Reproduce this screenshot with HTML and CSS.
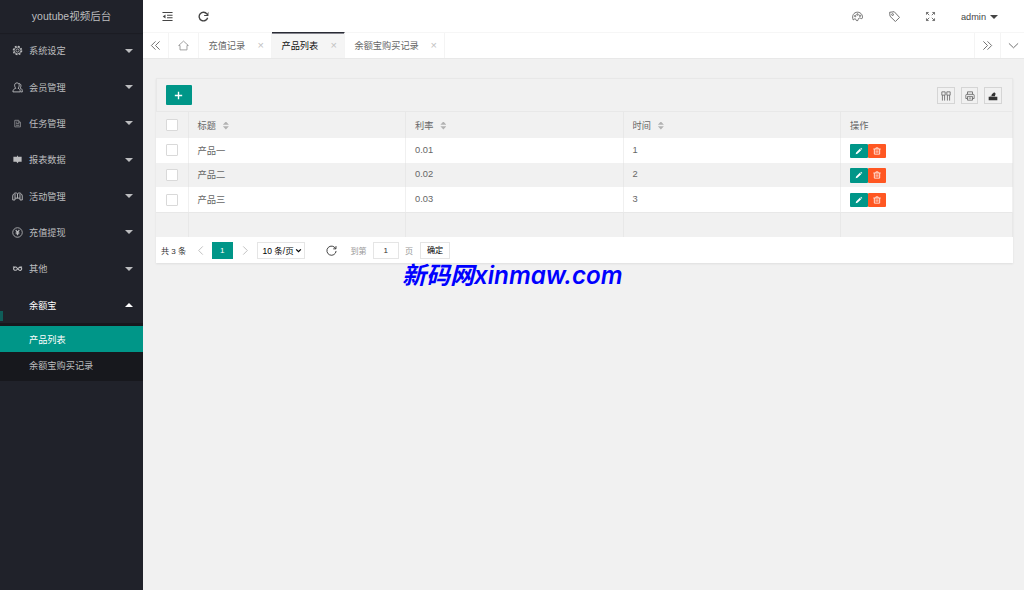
FILE: index.html
```
<!DOCTYPE html>
<html lang="zh-CN">
<head>
    <meta charset="UTF-8">
    <meta name="viewport" content="width=device-width, initial-scale=1.0">
    <title>youtube视频后台</title>
    <link rel="stylesheet" href="styles.css">
</head>
<body>
    <div class="side">
        <div class="logo">youtube视频后台</div>
        <ul class="nav">
            <li><svg class="ico" viewBox="0 0 12 12"><circle cx="6" cy="6" r="4.6" stroke-width="1.300" stroke-dasharray="2 1.610"/><circle cx="6" cy="6" r="3.7" stroke-width=".9"/><circle cx="6" cy="6" r="1.700" stroke-width=".9"/></svg><span>系统设定</span><i class="down"></i></li>
            <li><svg class="ico" viewBox="0 0 12 12"><path d="M4.2 6.800C2 4.500 2.500 1 5.400 1S8.600 4.500 6.600 6.800C8.300 7.500 9 8.300 9 10.800H1C1 8.500 2.200 7.500 4.200 6.800M7.500 1.500C10.300 1.900 10.200 5 8.800 6.500C10.500 7.200 11.300 8 11.300 10.800H9.500"/></svg><span>会员管理</span><i class="down"></i></li>
            <li><svg class="ico dim" viewBox="0 0 12 12"><path d="M3 2.500H7L9.200 4.500V9.700H3ZM6.800 2.500V4.700H9M4.300 4.500H5.500M4.300 6.200H8M4.300 8H8"/></svg><span>任务管理</span><i class="down"></i></li>
            <li><svg class="ico" viewBox="0 0 12 12"><path class="fill" d="M1.500 3H5.500V2H6.500V3H10.500V8.500H7.200L6 10.200L4.800 8.500H1.500Z"/></svg><span>报表数据</span><i class="down"></i></li>
            <li><svg class="ico" viewBox="0 0 12 12"><path d="M.8 9.800V5.500C1.300 1.800 5 1.500 6 3C7 1.500 10.700 1.800 11.200 5.500V9.800H8.700V7.800H3.300V9.800ZM6 3V7.800M3.300 3V7.800M8.700 3V7.800"/></svg><span>活动管理</span><i class="down"></i></li>
            <li><svg class="ico" viewBox="0 0 12 12"><circle cx="6" cy="6" r="5.200" stroke-width=".9"/><path d="M4 3.200L6 5.600L8 3.200M6 5.600V9M4 5.700H8M4 7.300H8" stroke-width="1.100"/></svg><span>充值提现</span><i class="down"></i></li>
            <li><svg class="ico" viewBox="0 0 12 12"><path d="M1 4.300H4.300L7.500 7.500C8.800 8.600 10.800 7.700 10.600 6.200C10.300 4.600 8.200 4.500 7.300 5.400L5 7.500C3.800 8.500 1.700 7.800 1.700 6.200C1.800 5.300 2.700 4.700 3.500 4.700M8 4.300H11" stroke-width="1.200"/></svg><span>其他</span><i class="down"></i></li>
            <li class="open"><span>余额宝</span><i class="up"></i></li>
        </ul>
        <div class="child">
            <a class="this">产品列表</a>
            <a>余额宝购买记录</a>
        </div>
    </div>

    <div class="main">
        <div class="header">
            <svg class="ico" viewBox="0 0 12 12"><path d="M.5 1.700H11.500M5.500 4.600H11.500M5.500 7.400H11.500M.5 10.300H11.500" stroke-width="1.200"/><path class="fill" d="M3.800 3.800V8.200L.8 6Z"/></svg>
            <svg class="ico refresh" viewBox="0 0 12 12"><path d="M9.800 3.300A4.700 4.700 0 1 0 10.500 7.300" stroke-width="1.500"/><path class="fill" d="M11.400 .8V5.500H6.700V4.300H9.200Z"/></svg>
            <div class="right">
                <svg class="ico" viewBox="0 0 12 12"><path d="M1.300 9.700C-.5 5 2 1.300 6 1.300S12 5 11.300 7.800C10.800 9.200 9.500 7.600 8 7.700C6 8 7.500 10.700 5.500 10.700C4 10.700 4.500 8.300 3.200 8.300C2.300 8.300 2.300 10 1.300 9.700Z"/><circle cx="3.500" cy="5.500" r=".8"/><circle cx="6" cy="3.800" r=".8"/><circle cx="8.700" cy="5.200" r=".8"/></svg>
                <svg class="ico" viewBox="0 0 12 12"><path d="M.7 1.400L5.700 .8L11.500 7L7 11.500L1.100 5.700Z"/><circle cx="3.900" cy="3.900" r="1"/></svg>
                <svg class="ico" viewBox="0 0 12 12"><path d="M1.600 4V1.600H4M1.600 1.600L4.600 4.600M8 1.600H10.400V4M10.400 1.600L7.400 4.600M1.600 8V10.400H4M1.600 10.400L4.600 7.400M10.400 8V10.400H8M10.400 10.400L7.400 7.400"/></svg>
                <div class="user">admin<i class="down"></i></div>
            </div>
        </div>

        <div class="tabs">
            <div class="ctrl prev"><svg class="ico" viewBox="0 0 12 12"><path d="M6 1.500L1.500 6L6 10.500M10.500 1.500L6 6L10.500 10.500"/></svg></div>
            <div class="home"><svg class="ico" viewBox="0 0 12 12"><path d="M.7 6L6 1.200L11.300 6H9.800V10.800H2.200V6Z"/></svg></div>
            <div class="tab">充值记录<b>×</b></div>
            <div class="tab on">产品列表<b>×</b></div>
            <div class="tab">余额宝购买记录<b>×</b></div>
            <div class="ctrl next"><svg class="ico" viewBox="0 0 12 12"><path d="M1.500 1.500L6 6L1.500 10.500M6 1.500L10.500 6L6 10.500"/></svg></div>
            <div class="ctrl more"><svg class="ico" viewBox="0 0 12 12"><path d="M1 3.700L6 8.500L11 3.700"/></svg></div>
        </div>

        <div class="card">
            <div class="toolbar">
                <button class="add"><svg class="ico" viewBox="0 0 12 12"><path d="M6 2V10M2 6H10" stroke-width="1.500"/></svg></button>
                <div class="tools">
                    <span><svg class="ico" viewBox="0 0 12 12"><path d="M1 1H5V5H1ZM7 1H11V5H7ZM1.700 5V11.500M4.300 5V11.500M7.700 5V11.500M10.300 5V11.500"/></svg></span>
                    <span><svg class="ico" viewBox="0 0 12 12"><path d="M3 4V1H9V4M3 9H1V5Q1 4 2.200 4H9.800Q11 4 11 5V9H9M3 6.500H9V11H3ZM4.500 8.500H7.500"/></svg></span>
                    <span><svg class="ico dark" viewBox="0 0 12 12"><path class="fill" d="M.8 7H11.200V11H.8ZM2 6.300L4.500 5.300V4L7.500 1.500L9.500 3.500L8.500 4.500V6.300Z"/></svg></span>
                </div>
            </div>
            <table>
                <colgroup><col class="c-check"><col class="c-data"><col class="c-data"><col class="c-data"><col></colgroup>
                <tr class="head">
                    <th><i class="check"></i></th>
                    <th>标题<em class="sort"></em></th>
                    <th>利率<em class="sort"></em></th>
                    <th>时间<em class="sort"></em></th>
                    <th>操作</th>
                </tr>
                <tr>
                    <td><i class="check"></i></td><td>产品一</td><td>0.01</td><td>1</td>
                    <td><div class="btns"><a class="edit"><svg class="ico" viewBox="0 0 12 12"><path class="fill" d="M1 11L1.700 8.300L7.300 2.700L9.300 4.700L3.700 10.300ZM8 2L9 1L11 3L10 4Z"/></svg></a><a class="del"><svg class="ico" viewBox="0 0 12 12"><path d="M.5 3H11.500M4.300 3V1.300H7.700V3M2 3V10.700H10V3M4.700 5V8.700M7.300 5V8.700" stroke-width="1.500"/></svg></a></div></td>
                </tr>
                <tr class="even">
                    <td><i class="check"></i></td><td>产品二</td><td>0.02</td><td>2</td>
                    <td><div class="btns"><a class="edit"><svg class="ico" viewBox="0 0 12 12"><path class="fill" d="M1 11L1.700 8.300L7.300 2.700L9.300 4.700L3.700 10.300ZM8 2L9 1L11 3L10 4Z"/></svg></a><a class="del"><svg class="ico" viewBox="0 0 12 12"><path d="M.5 3H11.500M4.300 3V1.300H7.700V3M2 3V10.700H10V3M4.700 5V8.700M7.300 5V8.700" stroke-width="1.500"/></svg></a></div></td>
                </tr>
                <tr>
                    <td><i class="check"></i></td><td>产品三</td><td>0.03</td><td>3</td>
                    <td><div class="btns"><a class="edit"><svg class="ico" viewBox="0 0 12 12"><path class="fill" d="M1 11L1.700 8.300L7.300 2.700L9.300 4.700L3.700 10.300ZM8 2L9 1L11 3L10 4Z"/></svg></a><a class="del"><svg class="ico" viewBox="0 0 12 12"><path d="M.5 3H11.500M4.300 3V1.300H7.700V3M2 3V10.700H10V3M4.700 5V8.700M7.300 5V8.700" stroke-width="1.500"/></svg></a></div></td>
                </tr>
                <tr class="blank"><td></td><td></td><td></td><td></td><td></td></tr>
            </table>
            <div class="page">
                <span class="count">共 3 条</span>
                <svg class="ico arrow" viewBox="0 0 12 12"><path d="M8.500 1.500L4 6L8.500 10.500"/></svg>
                <span class="curr">1</span>
                <svg class="ico arrow" viewBox="0 0 12 12"><path d="M3.500 1.500L8 6L3.500 10.500"/></svg>
                <span class="limit">10 条/页<svg class="ico" viewBox="0 0 12 12"><path d="M2 4L6 8L10 4" stroke-width="2.200"/></svg></span>
                <svg class="ico reload" viewBox="0 0 12 12"><path d="M10.500 4A5 5 0 1 0 11 6.500M10.900 1.200V4.200H7.900"/></svg>
                <span class="gray">到第</span>
                <span class="box num">1</span>
                <span class="gray">页</span>
                <span class="box sure">确定</span>
            </div>
        </div>
        <div class="mark"><span class="cn">新码网</span><span class="en">xinmaw.com</span></div>
    </div>
</body>
</html>
```
FILE: styles.css
```
* {
    box-sizing: border-box;
}
body {
    margin: 0;
    height: 590px;
    display: flex;
    overflow: hidden;
    background: #f1f1f1;
    color: #666;
    font: 9.2px "Liberation Sans", "Noto Sans CJK SC", sans-serif;
}
.ico {
    width: 11px;
    height: 11px;
    flex: none;
    fill: none;
    stroke: currentColor;
    stroke-width: 1;
}
.ico .fill {
    fill: currentColor;
    stroke: none;
}
i.down, i.up {
    border: 4px solid transparent;
    border-top-color: currentColor;
    border-bottom: 0;
}
i.up {
    border-top: 0;
    border-bottom: 4px solid currentColor;
}

/* sidebar */
.side {
    width: 143px;
    flex: none;
    background: #20222a;
    color: #bcbdbf;
}
.logo {
    height: 32.500px;
    line-height: 32px;
    text-align: center;
    font-size: 10.500px;
    box-shadow: 0 1px 1px rgba(0, 0, 0, .15);
}
.nav {
    margin: 0;
    padding: 0;
    list-style: none;
}
.nav li {
    position: relative;
    height: 36.350px;
    display: flex;
    align-items: center;
    padding: 0 10px 0 12px;
}
.nav span {
    margin-left: 6px;
    margin-top: -1px;
}
.nav i {
    margin-left: auto;
}
.nav .dim {
    opacity: .65;
}
.nav .open {
    color: #fff;
    padding-left: 23px;
}
.nav .open::before {
    content: "";
    position: absolute;
    left: 0;
    bottom: 2px;
    width: 3px;
    height: 10px;
    background: #0f5d59;
}
.child {
    padding: 3px 0;
    background: #17181d;
}
.child a {
    display: block;
    height: 26px;
    line-height: 28px;
    padding-left: 29px;
}
.child .this {
    background: #009688;
    color: #fff;
}

/* top bar */
.main {
    flex: 1;
    min-width: 0;
}
.header {
    height: 32px;
    display: flex;
    align-items: center;
    padding: 1px 26px 0 19px;
    background: #fff;
    color: #444;
}
.header .refresh {
    margin-left: 25px;
}
.right {
    margin-left: auto;
    display: flex;
    align-items: center;
    gap: 25.500px;
    color: #666;
}
.user {
    display: flex;
    align-items: center;
    gap: 4px;
    margin-left: -1px;
    color: #444;
    font-size: 9.200px;
}
.tabs {
    height: 27px;
    display: flex;
    background: #fff;
    border-top: 1px solid #f6f6f6;
    border-bottom: 1px solid #e8e8e8;
}
.tabs > div {
    display: flex;
    align-items: center;
    border-right: 1px solid #f4f4f4;
}
.tabs .ctrl, .tabs .home {
    width: 26px;
    justify-content: center;
}
.tabs .home {
    width: 30px;
    color: #999;
}
.tabs .tab {
    padding: 0 7px 1px 9.500px;
    width: 73px;
    justify-content: space-between;
}
.tabs .tab:nth-child(5) {
    width: 100px;
}
.tab b {
    font-weight: normal;
    font-size: 11px;
    color: #c2c2c2;
}
.tabs .on {
    margin-top: -1px;
    border-top: 1px solid #292b34;
    box-shadow: inset 0 1px #84848c;
    background: #f5f5f5;
    color: #111;
}
.tabs .next {
    width: 27px;
    margin-left: auto;
    border-left: 1px solid #f4f4f4;
}
.tabs .more {
    width: 23px;
    padding-left: 1px;
    border-right: 0;
}

/* table card */
.card {
    width: 856.500px;
    margin: 19px 0 0 13px;
    background: #fff;
    box-shadow: 0 1px 2px rgba(0, 0, 0, .08);
}
.toolbar {
    height: 34px;
    display: flex;
    align-items: center;
    justify-content: space-between;
    padding: 0 10px 0 9px;
    background: #f1f1f1;
    border: 1px solid #e8e8e8;
}
.add {
    width: 25.500px;
    height: 19.500px;
    padding: 0;
    border: 0;
    border-radius: 1px;
    display: flex;
    align-items: center;
    justify-content: center;
    background: #009688;
    color: #fff;
}
.add .ico {
    margin-right: 1px;
}
.tools {
    display: flex;
    gap: 6px;
}
.tools span {
    width: 17.500px;
    height: 17px;
    display: flex;
    align-items: center;
    justify-content: center;
    border: 1px solid #d5d5d5;
}
.tools .ico {
    width: 10px;
    height: 10px;
    margin: 1px 0 0 1px;
}
.tools .dark {
    color: #333;
}
table {
    width: 100%;
    table-layout: fixed;
    border-collapse: separate;
    border-spacing: 0;
}
.c-check {
    width: 32.500px;
}
.c-data {
    width: 217.500px;
}
tr {
    height: 24.650px;
}
th, td {
    height: 24.650px;
    padding: 0 9px 1px;
    text-align: left;
    font-weight: normal;
    vertical-align: middle;
    border-right: 1px solid #e8e8e8;
}
td {
    font-size: 9.300px;
    border-right-color: #f0f0f0;
}
.head th {
    height: 26px;
    background: #f1f1f1;
}
.even td {
    background: #f1f1f1;
}
.even td, .blank td {
    border-right-color: #e8e8e8;
}
.blank td {
    height: 25.500px;
    background: #f1f1f1;
    border-top: 1px solid #e8e8e8;
}
.check {
    display: block;
    width: 12px;
    height: 12px;
    margin: 1px 0 0 1px;
    border: 1px solid #d9d9d9;
    border-radius: 1px;
    background: #fff;
}
.sort {
    display: inline-block;
    width: 6px;
    height: 8px;
    margin-left: 7px;
    vertical-align: -1px;
    background: #b2b2b2;
    clip-path: polygon(50% 0, 100% 40%, 0 40%, 0 60%, 100% 60%, 50% 100%, 0 60%, 0 40%);
}
.btns {
    display: flex;
    padding-top: 2px;
}
.btns a {
    width: 18px;
    height: 14.500px;
    display: flex;
    align-items: center;
    justify-content: center;
    border-radius: 1px;
    color: #fff;
}
.btns .ico {
    width: 8px;
    height: 8px;
}
.edit {
    background: #009688;
}
.del {
    background: #ff5722;
}
.del .ico {
    opacity: .8;
}

/* pagination */
.page {
    height: 26px;
    display: flex;
    align-items: center;
    padding-left: 5px;
    color: #333;
    font-size: 8.100px;
    white-space: nowrap;
}
.count {
    width: 34px;
}
.arrow {
    color: #bbb;
}
.curr {
    width: 20.500px;
    height: 17px;
    line-height: 18px;
    margin: 0 7px 0 6px;
    text-align: center;
    background: #009688;
    color: #fff;
}
.limit {
    width: 48px;
    height: 17px;
    margin-left: 6px;
    padding: 0 2px 0 5px;
    display: flex;
    align-items: center;
    justify-content: space-between;
    border: 1px solid #e5e5e5;
    color: #000;
    font-size: 8.500px;
}
.limit .ico {
    width: 7px;
    height: 7px;
}
.reload {
    margin: 0 14px 0 21px;
}
.gray {
    width: 16px;
    color: #999;
}
.box {
    height: 17px;
    line-height: 16px;
    text-align: center;
    border: 1px solid #e5e5e5;
}
.num {
    width: 26.500px;
    margin: 0 6px;
}
.num + .gray {
    width: 8px;
}
.sure {
    width: 30px;
    margin-left: 7px;
    color: #000;
}

.mark {
    display: flex;
    align-items: baseline;
    height: 28px;
    line-height: 26px;
    margin-left: 259px;
    color: #00f;
    font-style: italic;
    white-space: nowrap;
}
.mark .cn {
    font-size: 24px;
    font-weight: 600;
}
.mark .en {
    font-family: Inter, sans-serif;
    font-size: 24.200px;
    font-weight: 600;
}
```
